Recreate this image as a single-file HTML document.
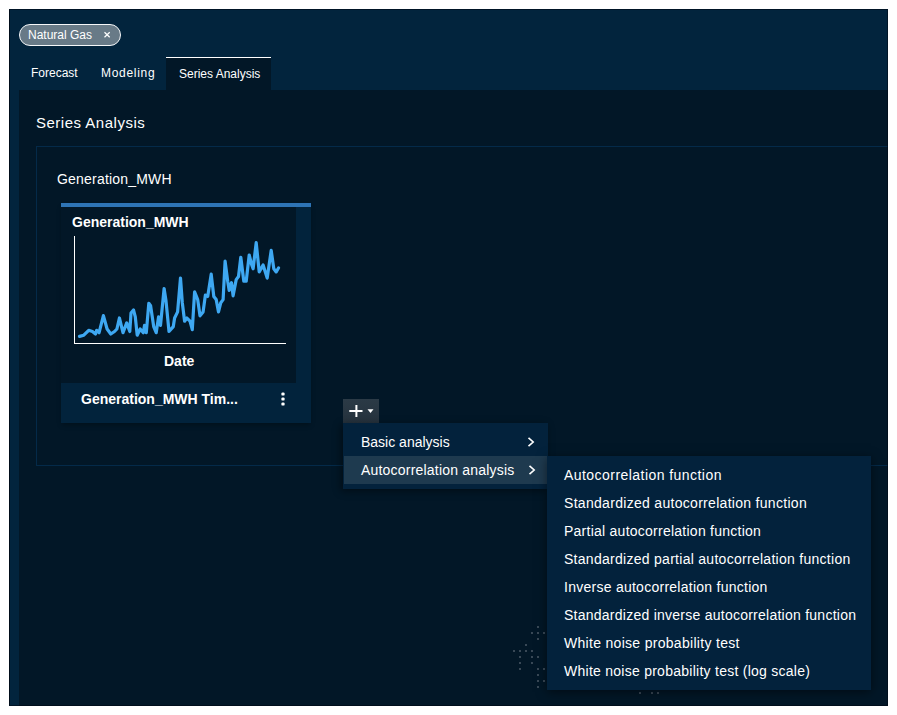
<!DOCTYPE html>
<html><head><meta charset="utf-8">
<style>
*{box-sizing:border-box;margin:0;padding:0}
html,body{width:897px;height:715px;background:#fff;overflow:hidden;font-family:"Liberation Sans",sans-serif}
#app{position:absolute;left:9px;top:9px;width:879px;height:697px;background:#02243d;overflow:hidden}
.abs{position:absolute;white-space:nowrap}
#chip{position:absolute;left:10px;top:15px;width:102px;height:22px;border:1px solid #f4f6f8;border-radius:11px;background:#687a87;color:#fff;font-size:12px}
#chip .t{position:absolute;left:8px;top:3px}
#chip .x{position:absolute;left:82.5px;top:5.6px}
.tab{position:absolute;top:57px;color:#fff;font-size:12px}
#activetab{position:absolute;left:157px;top:48px;width:105px;height:33px;background:#021727;border-top:1px solid #ffffff}
#content{position:absolute;left:10px;top:81px;width:869px;height:616px;background:#021727}
#panel{position:absolute;left:27px;top:137px;width:870px;height:320px;border:1px solid #042a49}
#card{position:absolute;left:52px;top:194px;width:250px;height:220px;background:#021727;box-shadow:0 3px 5px -1px rgba(0,0,0,0.3)}
#cardbar{position:absolute;left:0;top:0;width:250px;height:4px;background:#2e74b5}
#cardstrip{position:absolute;left:235px;top:4px;width:15px;height:176px;background:#02233c}
#cardfoot{position:absolute;left:0;top:180px;width:250px;height:40px;background:#02233c}
#plusbtn{position:absolute;left:334px;top:390px;width:36px;height:24px;background:linear-gradient(#2b3a46,#25323d)}
#menu{position:absolute;left:334px;top:414px;width:205px;height:66px;background:#03223c;box-shadow:-2px 2px 8px rgba(0,0,0,0.45)}
.mi{position:absolute;left:0;width:205px;height:28px;color:#fff;font-size:14px;padding-left:18px;line-height:28px;white-space:nowrap}
.hov{background:#1e3a4f;margin-left:1px;width:204px;padding-left:17px}
.chev{position:absolute;left:184px;top:7.8px}
#submenu{position:absolute;left:538px;top:447px;width:324px;height:234px;background:#03223c;box-shadow:0 2px 10px rgba(0,0,0,0.5)}
.si{position:absolute;left:17px;height:28px;line-height:28px;color:#fff;font-size:14px;letter-spacing:0.2px;white-space:nowrap}
#edge{position:absolute;left:0;top:0;width:879px;height:697px;border:1px solid rgba(0,8,20,0.55);border-left-color:#000c19;z-index:50;pointer-events:none}
</style></head><body>
<div id="app">
  <div id="edge"></div>
  <div id="chip"><span class="t">Natural Gas</span><svg class="x" width="8" height="8" viewBox="0 0 8 8"><path d="M1.5 1.3L6.7 6.2M6.7 1.3L1.5 6.2" stroke="#fff" stroke-width="1.25"/></svg></div>
  <div id="content"></div>
  <div id="activetab"></div>
  <div class="tab" style="left:22px">Forecast</div>
  <div class="tab" style="left:92px;letter-spacing:0.7px">Modeling</div>
  <div class="tab" style="left:170px;top:58px">Series Analysis</div>
  <div class="abs" style="left:27px;top:105px;color:#fff;font-size:15px;letter-spacing:0.5px">Series Analysis</div>
  <div id="panel"></div>
  <svg width="879" height="697" style="position:absolute;left:0;top:0"><rect x="528" y="617" width="2" height="2" fill="#384856"/><rect x="522" y="623" width="2" height="2" fill="#384856"/><rect x="528" y="623" width="2" height="2" fill="#384856"/><rect x="534" y="623" width="2" height="2" fill="#384856"/><rect x="528" y="629" width="2" height="2" fill="#384856"/><rect x="516" y="635" width="2" height="2" fill="#384856"/><rect x="504" y="641" width="2" height="2" fill="#384856"/><rect x="510" y="641" width="2" height="2" fill="#384856"/><rect x="516" y="641" width="2" height="2" fill="#384856"/><rect x="522" y="641" width="2" height="2" fill="#384856"/><rect x="510" y="647" width="2" height="2" fill="#384856"/><rect x="522" y="647" width="2" height="2" fill="#384856"/><rect x="528" y="647" width="2" height="2" fill="#384856"/><rect x="510" y="653" width="2" height="2" fill="#384856"/><rect x="522" y="653" width="2" height="2" fill="#384856"/><rect x="510" y="659" width="2" height="2" fill="#384856"/><rect x="528" y="659" width="2" height="2" fill="#384856"/><rect x="534" y="659" width="2" height="2" fill="#384856"/><rect x="528" y="665" width="2" height="2" fill="#384856"/><rect x="528" y="671" width="2" height="2" fill="#384856"/><rect x="534" y="671" width="2" height="2" fill="#384856"/><rect x="528" y="677" width="2" height="2" fill="#384856"/><rect x="630" y="683" width="2" height="2" fill="#384856"/><rect x="642" y="683" width="2" height="2" fill="#384856"/><rect x="648" y="683" width="2" height="2" fill="#384856"/></svg>

  <div class="abs" style="left:48px;top:162px;color:#fff;font-size:14px;letter-spacing:0.2px">Generation_MWH</div>
  <div id="card">
    <div id="cardbar"></div>
    <div id="cardstrip"></div>
    <div class="abs" style="left:11px;top:11px;color:#fff;font-size:14px;font-weight:bold">Generation_MWH</div>
    <svg id="chart" width="250" height="180" style="position:absolute;left:0;top:0">
      <line x1="13.5" y1="33" x2="13.5" y2="140" stroke="#fff" stroke-width="1"/>
      <line x1="13" y1="140.5" x2="225" y2="140.5" stroke="#fff" stroke-width="1"/>
      <polyline id="series" fill="none" stroke="#3ea8f2" stroke-width="3.2" stroke-linejoin="round" stroke-linecap="round" points="18.5,133.4 22.8,132.2 27.7,127.3 31.4,128.5 34.5,131.0 35.7,127.3 38.1,129.7 42.4,112.6 46.1,126.0 49.8,131.0 53.5,128.5 55.9,126.0 58.4,115.0 62.0,129.7 65.7,119.9 68.8,128.5 70.0,110.1 72.5,107.0 74.3,113.8 76.2,132.2 79.2,126.0 82.3,129.7 83.5,122.4 85.3,129.7 87.8,100.3 89.6,102.8 92.7,123.6 95.2,129.7 97.6,113.8 99.5,122.4 103.1,85.6 105.0,97.8 108.0,128.5 112.3,123.6 113.6,115.0 116.6,108.9 119.5,75.0 121.3,99.7 123.6,118.2 125.9,115.0 129.0,118.2 131.3,126.6 133.6,88.9 136.7,96.6 139.0,112.8 142.1,108.9 144.4,92.0 146.7,93.5 150.2,71.2 152.8,93.5 155.2,96.6 157.5,108.9 159.8,99.7 162.1,96.6 164.1,58.2 166.7,78.2 168.2,87.4 170.5,79.7 172.1,92.8 175.2,76.6 177.5,73.5 179.8,54.3 182.8,78.2 185.2,78.2 188.2,52.0 190.5,61.2 192.1,65.8 195.2,39.7 198.2,68.9 202.1,62.0 206.2,75.1 210.2,47.4 212.8,65.8 215.2,68.9 217.5,65.0"/>
    </svg>
    <div class="abs" style="left:103px;top:150px;color:#fff;font-size:14px;font-weight:bold">Date</div>
    <div id="cardfoot">
      <div class="abs" style="left:20px;top:8px;color:#fff;font-size:14px;font-weight:bold">Generation_MWH Tim...</div>
      <svg width="6" height="16" style="position:absolute;left:219px;top:7.5px"><rect x="1.4" y="1.4" width="3.2" height="3.2" rx="1.2" fill="#fff"/><rect x="1.4" y="6.4" width="3.2" height="3.2" rx="1.2" fill="#fff"/><rect x="1.4" y="11.4" width="3.2" height="3.2" rx="1.2" fill="#fff"/></svg>
    </div>
  </div>
  <div id="plusbtn">
    <svg width="36" height="24" style="position:absolute;left:0;top:0">
      <rect x="6.3" y="11" width="13.2" height="2" fill="#fff"/>
      <rect x="12.4" y="6" width="2" height="12" fill="#fff"/>
      <polygon points="24.5,10.3 30.5,10.3 27.5,14" fill="#fff"/>
    </svg>
  </div>
  <div id="menu">
    <div class="mi" style="top:5px">Basic analysis<svg class="chev" width="10" height="12" viewBox="0 0 10 12"><path d="M1.5 1.8L6.2 6L1.5 10.2" fill="none" stroke="#fff" stroke-width="1.6"/></svg></div>
    <div class="mi hov" style="top:33px;letter-spacing:0.2px">Autocorrelation analysis<svg class="chev" width="10" height="12" viewBox="0 0 10 12"><path d="M1.5 1.8L6.2 6L1.5 10.2" fill="none" stroke="#fff" stroke-width="1.6"/></svg></div>
  </div>
  <div id="submenu">
    <div class="si" style="top:5px;letter-spacing:0.45px">Autocorrelation function</div>
    <div class="si" style="top:33px;letter-spacing:0.3px">Standardized autocorrelation function</div>
    <div class="si" style="top:61px;letter-spacing:0.25px">Partial autocorrelation function</div>
    <div class="si" style="top:89px;letter-spacing:0.28px">Standardized partial autocorrelation function</div>
    <div class="si" style="top:117px;letter-spacing:0.26px">Inverse autocorrelation function</div>
    <div class="si" style="top:145px;letter-spacing:0.25px">Standardized inverse autocorrelation function</div>
    <div class="si" style="top:173px;letter-spacing:0.3px">White noise probability test</div>
    <div class="si" style="top:201px;letter-spacing:0.26px">White noise probability test (log scale)</div>
  </div>
</div>
</body></html>
